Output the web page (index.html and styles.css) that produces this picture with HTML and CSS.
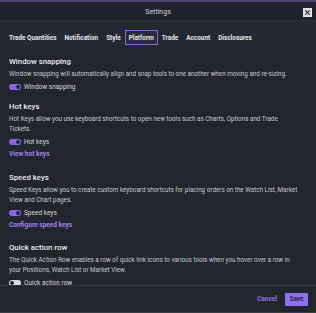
FILE: index.html
```html
<!DOCTYPE html>
<html>
<head>
<meta charset="utf-8">
<link rel="stylesheet" href="styles.css">
</head>
<body>
<div class="modal">
  <div class="header">
    <span></span>
    <span class="title">Settings</span>
    <span class="close-wrap"><span class="close"><svg viewBox="0 0 10 10" width="9" height="9"><rect x="0.5" y="0.5" width="9" height="9" fill="#d9d9de" stroke="#eeeeee"/><path d="M2.6 2.6 L7.4 7.4 M7.4 2.6 L2.6 7.4" stroke="#2a2d35" stroke-width="1.3"/></svg></span></span>
  </div>
  <div class="tabs">
    <span class="tab">Trade Quantities</span>
    <span class="tab">Notification</span>
    <span class="tab">Style</span>
    <span class="tab active">Platform</span>
    <span class="tab">Trade</span>
    <span class="tab">Account</span>
    <span class="tab">Disclosures</span>
  </div>
  <div class="content">
    <div class="toggle-row partial"><span class="toggle on"></span><span class="dot"></span></div>

    <section class="section">
      <h3>Window snapping</h3>
      <p>Window snapping will automatically align and snap tools to one another when moving and re-sizing.</p>
      <div class="toggle-row"><span class="toggle on"></span><span class="label">Window snapping</span></div>
    </section>

    <section class="section">
      <h3>Hot keys</h3>
      <p>Hot Keys allow you use keyboard shortcuts to open new tools such as Charts, Options and Trade Tickets.</p>
      <div class="toggle-row"><span class="toggle on"></span><span class="label">Hot keys</span></div>
      <a class="link">View hot keys</a>
    </section>

    <section class="section">
      <h3>Speed keys</h3>
      <p>Speed Keys allow you to create custom keyboard shortcuts for placing orders on the Watch List, Market View and Chart pages.</p>
      <div class="toggle-row"><span class="toggle on"></span><span class="label">Speed keys</span></div>
      <a class="link">Configure speed keys</a>
    </section>

    <section class="section">
      <h3>Quick action row</h3>
      <p>The Quick Action Row enables a row of quick link icons to various tools when you hover over a row in your Positions, Watch List or Market View.</p>
      <div class="toggle-row"><span class="toggle off"></span><span class="label">Quick action row</span></div>
    </section>
  </div>
  <div class="footer">
    <button class="btn-cancel">Cancel</button>
    <button class="btn-save">Save</button>
  </div>
</div>
</body>
</html>
```
FILE: styles.css
```css
* { box-sizing: border-box; }
html, body { margin: 0; padding: 0; }
body {
  width: 316px;
  height: 313px;
  overflow: hidden;
  background: #22252c;
  font-family: Roboto, "Liberation Sans", sans-serif;
  color: #e8e8ec;
}
.modal {
  width: 316px;
  height: 313px;
  display: flex;
  flex-direction: column;
  border-top: 2px solid #4e4477;
  border-bottom: 1px solid #3a3d46;
  background: #22252c;
}
.header {
  height: 19px;
  display: grid;
  grid-template-columns: 1fr auto 1fr;
  align-items: center;
  background: #1f222a;
  border-bottom: 1px solid #2c3039;
  flex-shrink: 0;
}
.title {
  font-size: 7px;
  color: #d4d4da;
  padding-top: 1px;
}
.close-wrap {
  justify-self: end;
  padding: 3px 4px 0 0;
  display: flex;
}
.close { display: flex; }
.tabs {
  height: 26px;
  display: flex;
  align-items: center;
  padding: 7px 0 0 5px;
  background: #242830;
  flex-shrink: 0;
}
.tab {
  font-size: 6.4px;
  line-height: 8px;
  font-weight: 700;
  color: #e4e4ea;
  padding: 2.5px 3px;
  border: 1px solid transparent;
  white-space: nowrap;
}
.tab.active {
  border-color: #8566e0;
  background: #2a2c3b;
}
.content {
  flex: 1;
  overflow: hidden;
  padding: 0 18px 0 9px;
}
.toggle-row {
  height: 10px;
  display: flex;
  align-items: center;
  gap: 3px;
}
.section .toggle-row { margin-top: 1px; }
.toggle-row.partial {
  margin-top: -10px;
  margin-bottom: 10px;
}
.dot {
  width: 1.5px;
  height: 1.5px;
  background: #c8c8d0;
  margin: 6px 0 0 12px;
}
.toggle {
  width: 12px;
  height: 6px;
  border-radius: 3px;
  position: relative;
  flex-shrink: 0;
}
.toggle::after {
  content: "";
  position: absolute;
  top: 1px;
  width: 4px;
  height: 4px;
  border-radius: 50%;
  background: #23262e;
}
.toggle.on { background: #8b63ee; }
.toggle.on::after { right: 1px; }
.toggle.off { background: #d8d8dc; }
.toggle.off::after { left: 1px; }
.label {
  font-size: 6.5px;
  color: #d8d8de;
}
.section {
  display: flex;
  flex-direction: column;
  gap: 2px;
  margin-bottom: 10px;
}
h3 {
  margin: 0;
  font-size: 7.8px;
  line-height: 10px;
  font-weight: 500;
  color: #ececf0;
}
p {
  margin: 0;
  font-size: 6.3px;
  line-height: 10px;
  color: #c8c8d0;
}
.link {
  font-size: 6.5px;
  line-height: 10px;
  font-weight: 700;
  color: #9f80f0;
  margin-bottom: 3.5px;
}
.footer {
  height: 27px;
  flex-shrink: 0;
  border-top: 1px solid #363944;
  display: flex;
  align-items: center;
  justify-content: flex-end;
  gap: 8px;
  padding-right: 8px;
  background: #22252c;
}
button {
  font-family: inherit;
  font-size: 6.5px;
  font-weight: 700;
  border: none;
  cursor: pointer;
}
.btn-cancel {
  background: none;
  color: #8f78e6;
  padding: 0;
}
.btn-save {
  background: #9070f2;
  color: #2a2240;
  width: 23px;
  height: 13px;
  padding: 0;
  border-radius: 1px;
}
```
